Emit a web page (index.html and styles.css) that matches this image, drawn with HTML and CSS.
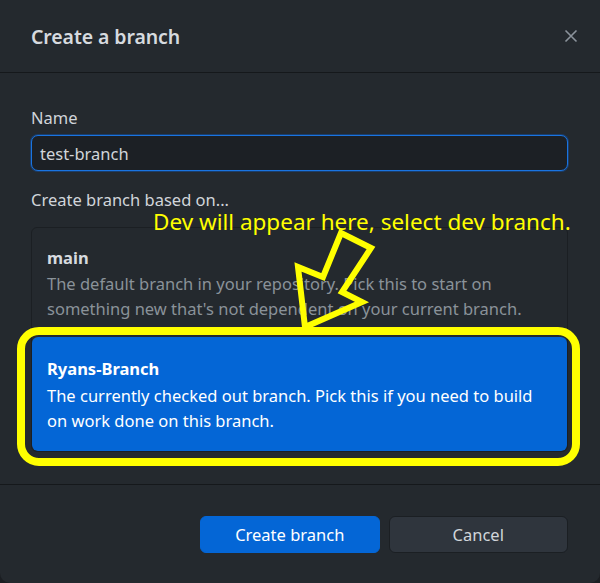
FILE: index.html
```html
<!DOCTYPE html>
<html>
<head>
<meta charset="utf-8">
<link rel="stylesheet" href="styles.css">
</head>
<body>
<div class="dialog">
  <header class="dialog-header">
    <h1 class="title">Create a branch</h1>
    <button class="close" aria-label="Close">
      <svg width="14" height="14" viewBox="0 0 14 14"><path d="M1.5 1.5 L12.5 12.5 M12.5 1.5 L1.5 12.5" stroke="#8b939c" stroke-width="1.6" fill="none"/></svg>
    </button>
  </header>
  <div class="dialog-content">
    <label class="field-label">Name</label>
    <div class="text-input">test-branch</div>
    <div class="field-label based">Create branch based on...</div>
    <div class="branch-list">
      <div class="branch-item">
        <div class="branch-name">main</div>
        <div class="branch-desc">The default branch in your repository. Pick this to start on something new that's not dependent on your current branch.</div>
      </div>
      <div class="branch-item selected">
        <div class="branch-name">Ryans-Branch</div>
        <div class="branch-desc">The currently checked out branch. Pick this if you need to build on work done on this branch.</div>
      </div>
    </div>
  </div>
  <footer class="dialog-footer">
    <button class="btn btn-primary">Create branch</button>
    <button class="btn btn-secondary">Cancel</button>
  </footer>
  <div class="annotation-text">Dev will appear here, select dev branch.</div>
  <svg class="annotation" width="600" height="583" viewBox="0 0 600 583">
    <rect x="21" y="331" width="555" height="131" rx="18" ry="18" fill="none" stroke="#ffff00" stroke-width="8"/>
    <polygon points="341,233 371,248 342,292 362,302 305,327 298,267 323,277" fill="none" stroke="#ffff00" stroke-width="6" stroke-linejoin="miter"/>
  </svg>
</div>
</body>
</html>
```
FILE: styles.css
```css
html, body {
  margin: 0;
  padding: 0;
  background: #1b1e22;
}
body {
  font-family: "Noto Sans", "Open Sans", sans-serif;
  color: #d1d5da;
}
.dialog {
  position: relative;
  width: 600px;
  height: 583px;
  background: #24292e;
  border-radius: 0 0 10px 10px;
  display: flex;
  flex-direction: column;
  overflow: hidden;
}
.dialog-header {
  height: 72px;
  border-bottom: 1px solid #15181b;
  display: flex;
  align-items: center;
  justify-content: space-between;
  padding: 0 22px 0 31px;
  box-sizing: content-box;
  flex-shrink: 0;
}
.title {
  margin: 0;
  font-size: 19.5px;
  font-weight: 600;
  color: #d6dadf;
  letter-spacing: -0.1px;
}
.close {
  background: none;
  border: 0;
  padding: 0;
  width: 14px;
  height: 14px;
  display: flex;
}
.dialog-content {
  padding: 32px 32px 0 31px;
  flex: 1;
}
.field-label {
  display: block;
  font-size: 16.5px;
  line-height: 25px;
  color: #d1d5da;
}
.text-input {
  margin-top: 5px;
  height: 34px;
  border: 1px solid #1a74e0;
  box-shadow: 0 0 0 1px rgba(10, 100, 220, 0.35);
  border-radius: 7px;
  background: #1c2025;
  color: #d1d5da;
  font-size: 16.5px;
  line-height: 36px;
  padding-left: 8px;
}
.based {
  margin-top: 18px;
  line-height: 22px;
}
.branch-list {
  margin-top: 16px;
  border: 1px solid #1b1f23;
  border-radius: 6px;
  overflow: hidden;
}
.branch-item {
  padding: 17px 16px 17px 15px;
  height: 75px;
}
.branch-item.selected {
  background: #0466d6;
  padding: 19px 16px 20px 15px;
  border-radius: 6px;
}
.branch-name {
  font-size: 16.5px;
  font-weight: 700;
  line-height: 25px;
  color: #d6dadf;
}
.branch-desc {
  font-size: 16.5px;
  line-height: 25px;
  color: #8a9299;
  margin-top: 1px;
}
.selected .branch-name,
.selected .branch-desc {
  color: #ffffff;
}
.selected .branch-desc {
  margin-top: 2px;
}
.dialog-footer {
  border-top: 1px solid #15181b;
  padding: 31px 32px 30px 200px;
  display: flex;
  gap: 9px;
  flex-shrink: 0;
}
.btn {
  height: 37px;
  border-radius: 6px;
  font-family: "Noto Sans", "Open Sans", sans-serif;
  font-size: 16.5px;
  padding: 0;
  flex: 1;
}
.btn-primary {
  background: #0466d6;
  border: 1px solid #0466d6;
  color: #ffffff;
}
.btn-secondary {
  background: #2f353d;
  border: 1px solid #1b1f23;
  color: #d1d5da;
}
.annotation-text {
  position: absolute;
  left: 153px;
  top: 213px;
  font-size: 22.5px;
  line-height: 18px;
  color: #ffff00;
  white-space: nowrap;
  font-family: "Noto Sans", "Open Sans", sans-serif;
}
.annotation {
  position: absolute;
  left: 0;
  top: 0;
  pointer-events: none;
}
```
